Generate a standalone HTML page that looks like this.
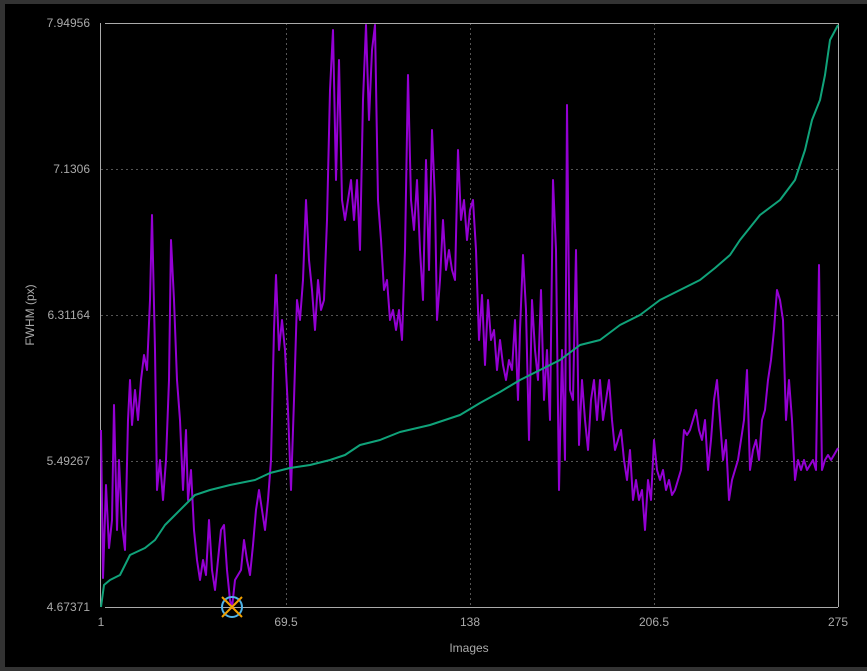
<!DOCTYPE html>
<html><head><meta charset="utf-8"><style>
html,body{margin:0;padding:0;background:#333;}
body{width:867px;height:671px;overflow:hidden;position:relative;font-family:"Liberation Sans",sans-serif;}
.plot{position:absolute;left:5px;top:4px;width:862px;height:663px;background:#000;}
svg{position:absolute;left:0;top:0;}
</style></head><body>
<div class="plot"></div>
<svg width="867" height="671" viewBox="0 0 867 671">
<g stroke="#555" stroke-dasharray="2,3" stroke-width="1">
<line x1="101" y1="169.5" x2="838" y2="169.5"/><line x1="101" y1="315.5" x2="838" y2="315.5"/><line x1="101" y1="461.5" x2="838" y2="461.5"/>
<line x1="286.5" y1="23" x2="286.5" y2="607"/><line x1="470.5" y1="23" x2="470.5" y2="607"/><line x1="654.5" y1="23" x2="654.5" y2="607"/>
</g>
<g stroke="#aaa" stroke-width="1">
<line x1="100.5" y1="23" x2="100.5" y2="607"/>
<line x1="105" y1="607.5" x2="838" y2="607.5"/>
<line x1="105" y1="23.5" x2="838" y2="23.5"/>
<line x1="838.5" y1="23" x2="838.5" y2="607"/>
</g>
<g fill="#aaa" font-size="12" font-family="Liberation Sans,sans-serif">
<text x="90" y="27" text-anchor="end">7.94956</text>
<text x="90" y="173" text-anchor="end">7.1306</text>
<text x="90" y="319" text-anchor="end">6.31164</text>
<text x="90" y="465" text-anchor="end">5.49267</text>
<text x="90" y="611" text-anchor="end">4.67371</text>
<text x="101" y="626" text-anchor="middle">1</text>
<text x="286" y="626" text-anchor="middle">69.5</text>
<text x="470" y="626" text-anchor="middle">138</text>
<text x="654" y="626" text-anchor="middle">206.5</text>
<text x="838" y="626" text-anchor="middle">275</text>
<text x="469" y="652" text-anchor="middle">Images</text>
<text transform="translate(34,315) rotate(-90)" text-anchor="middle">FWHM (px)</text>
</g>
<polyline fill="none" stroke="#9400d3" stroke-width="2" stroke-linejoin="round" points="101,430 103,578 106,485 109,548 112,520 114,405 117,530 119,460 122,525 125,550 128,420 130,380 132,425 135,390 138,420 141,380 144,355 147,370 150,300 152,215 155,350 157,490 160,460 163,500 166,460 169,380 171,240 174,300 177,380 180,420 183,490 186,430 188,500 191,470 194,530 197,560 200,580 203,560 206,575 209,520 212,570 215,590 218,560 221,530 224,525 227,570 230,600 232,608 235,580 238,575 241,570 244,540 247,560 250,575 253,545 256,510 259,490 262,510 265,530 268,500 271,460 274,330 276,275 279,350 282,320 285,350 288,410 291,490 294,400 297,300 300,320 303,280 306,200 309,260 312,290 315,330 318,280 321,310 324,300 327,220 330,90 333,30 336,180 339,60 342,200 345,220 348,200 351,180 354,220 357,180 360,250 363,100 366,25 369,120 372,50 375,25 378,200 381,240 384,290 387,280 390,320 393,310 396,330 399,310 402,340 405,250 408,75 411,200 414,230 417,180 420,250 423,300 426,160 429,270 432,130 435,200 437,320 440,280 443,220 446,270 449,250 452,270 455,280 458,150 461,220 464,200 467,240 470,210 473,200 476,250 479,340 482,295 485,365 488,300 491,340 494,330 497,370 500,340 503,365 506,380 509,360 512,370 515,320 518,400 520,330 523,255 526,310 529,440 532,300 535,350 538,380 541,290 544,400 547,350 550,420 553,180 556,250 559,490 562,350 565,460 567,105 570,390 573,400 576,250 579,445 582,380 585,420 588,450 591,400 594,380 597,420 600,380 603,420 606,400 609,380 612,420 615,450 618,440 621,430 624,460 627,480 630,450 633,500 636,480 639,500 642,490 645,530 648,480 651,500 654,440 657,470 660,480 663,470 666,490 669,480 672,495 675,490 678,480 681,470 684,430 687,435 690,430 693,420 696,410 699,430 702,440 705,420 708,470 711,440 714,400 717,380 720,420 723,460 726,440 729,500 732,480 735,470 738,460 741,440 744,420 747,370 750,470 753,450 756,440 759,460 762,420 765,410 768,380 771,360 774,330 777,290 780,300 783,320 786,420 789,380 792,420 795,480 798,460 801,470 804,460 807,470 810,465 813,460 816,470 819,265 822,470 825,460 828,455 831,460 834,455 838,448"/>
<polyline fill="none" stroke="#10a37a" stroke-width="2" stroke-linejoin="round" points="101,607 104,585 110,580 120,575 130,555 145,548 155,540 165,525 175,515 185,505 195,495 210,490 230,485 255,480 270,473 290,468 310,465 330,460 345,455 360,445 380,440 400,432 430,425 460,415 480,403 500,392 520,380 540,370 560,360 580,345 600,340 620,325 640,315 660,300 680,290 700,280 715,268 730,255 740,240 760,215 780,200 795,180 805,150 812,120 820,100 825,75 830,40 838,25"/>
<circle cx="232" cy="607" r="10" fill="none" stroke="#4fb3e8" stroke-width="2"/>
<path d="M222 597 L242 617 M242 597 L222 617" stroke="#f0a000" stroke-width="2"/>
</svg>
</body></html>
